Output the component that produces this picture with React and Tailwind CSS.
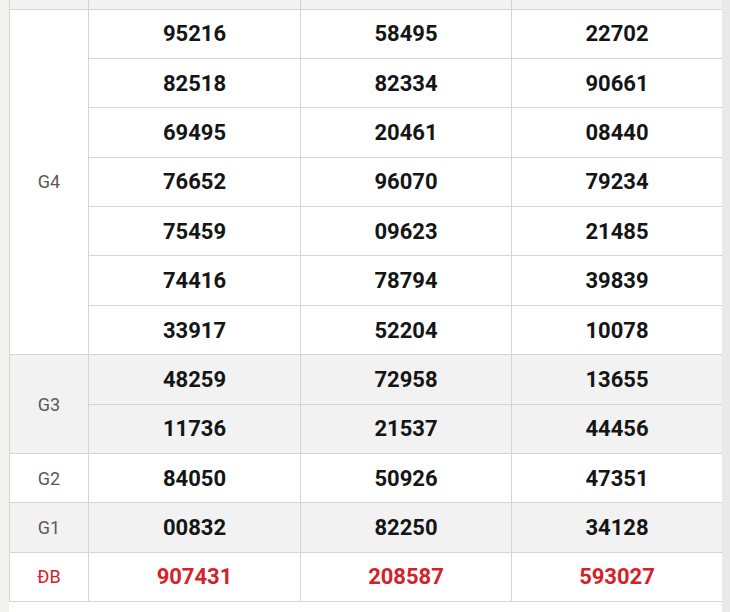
import React from 'react';

const g4 = [
    ['95216', '58495', '22702'],
    ['82518', '82334', '90661'],
    ['69495', '20461', '08440'],
    ['76652', '96070', '79234'],
    ['75459', '09623', '21485'],
    ['74416', '78794', '39839'],
    ['33917', '52204', '10078'],
];
const g3 = [
    ['48259', '72958', '13655'],
    ['11736', '21537', '44456'],
];

const cell = 'border border-[#d4d4d4] text-center align-middle';
const num = cell + ' text-[22px] font-bold text-[#151515]';
const lbl = cell + ' text-[18px] text-[#5a5a5a]';

const Nums = ({ row, red }) => (
    <>
        {row.map((n, i) => (
            <td key={i} className={red ? cell + ' text-[22px] font-bold text-[#d3222a]' : num}>{n}</td>
        ))}
    </>
);

export default function App() {
    return (
        <div className="flex w-[730px] h-[612px] overflow-hidden bg-white" style={{ fontFamily: 'Roboto, "Liberation Sans", sans-serif' }}>
            <div className="w-[9px] shrink-0 bg-[#f2f2ef]" />
            <div className="w-[713px] shrink-0 bg-white">
                <table className="w-[713px] border-collapse table-fixed">
                    <colgroup>
                        <col className="w-[79px]" />
                        <col className="w-[212px]" />
                        <col className="w-[211px]" />
                        <col className="w-[211px]" />
                    </colgroup>
                    <tbody>
                        <tr className="h-[9px] bg-[#f3f3f3]">
                            <td className="border-x border-b border-[#d4d4d4]" />
                            <td className="border-x border-b border-[#d4d4d4]" />
                            <td className="border-x border-b border-[#d4d4d4]" />
                            <td className="border-x border-b border-[#d4d4d4]" />
                        </tr>
                        {g4.map((row, i) => (
                            <tr key={'g4' + i} className="h-[49.4px] bg-white">
                                {i === 0 && <td rowSpan={7} className={lbl}>G4</td>}
                                <Nums row={row} />
                            </tr>
                        ))}
                        {g3.map((row, i) => (
                            <tr key={'g3' + i} className="h-[49.4px] bg-[#f2f2f2]">
                                {i === 0 && <td rowSpan={2} className={lbl}>G3</td>}
                                <Nums row={row} />
                            </tr>
                        ))}
                        <tr className="h-[49.4px] bg-white">
                            <td className={lbl}>G2</td>
                            <Nums row={['84050', '50926', '47351']} />
                        </tr>
                        <tr className="h-[49.4px] bg-[#f2f2f2]">
                            <td className={lbl}>G1</td>
                            <Nums row={['00832', '82250', '34128']} />
                        </tr>
                        <tr className="h-[49.4px] bg-white">
                            <td className={cell + ' text-[18px] text-[#d3222a]'}>ĐB</td>
                            <Nums row={['907431', '208587', '593027']} red />
                        </tr>
                    </tbody>
                </table>
            </div>
            <div className="flex-1 bg-[#e9e9e9]" />
        </div>
    );
}
